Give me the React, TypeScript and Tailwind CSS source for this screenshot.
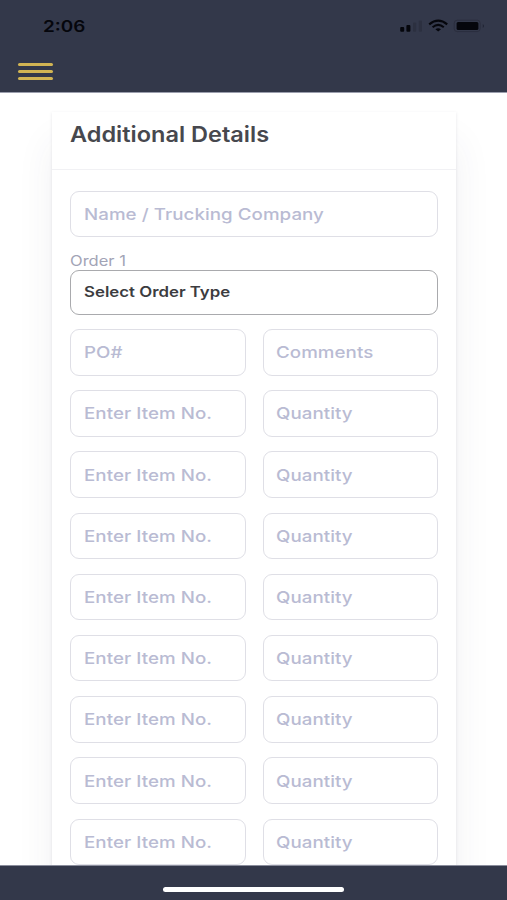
import { clsx } from 'clsx';

const ITEM_ROWS = 8;

const StatusBar = () => (
  <div className="flex h-[52px] items-center justify-between pl-[43px] pr-[20px] text-[#05060c]">
    <span className="inline-block origin-left scale-x-[1.18] text-base font-semibold leading-none">2:06</span>
    <svg width="88" height="16" viewBox="0 0 88 16" fill="none">
      {/* signal */}
      <rect x="1.2" y="9" width="4" height="4.8" rx="1" fill="currentColor" />
      <rect x="7.4" y="7" width="4" height="6.8" rx="1" fill="currentColor" />
      <rect x="14" y="4.5" width="3.2" height="9.3" rx="1" fill="#2c3040" />
      <rect x="19.8" y="2.5" width="3.2" height="11.3" rx="1" fill="#2c3040" />
      {/* wifi */}
      <path d="M30.2 6.3Q39.2 -.9 48.2 6.3" stroke="currentColor" strokeWidth="2.2" />
      <path d="M33.6 9.2Q39.2 4.7 44.8 9.2" stroke="currentColor" strokeWidth="2.1" />
      <path d="M36.4 11.2Q39.2 9.2 42 11.2L39.2 13.6Z" fill="currentColor" />
      {/* battery */}
      <rect x="55.2" y="2.2" width="26" height="11.4" rx="3" stroke="#2b2e3e" />
      <rect x="57.6" y="4" width="21.8" height="8" rx="1.5" fill="currentColor" />
      <path d="M83.8 5.9Q86.2 7.9 83.8 9.9Z" fill="#212433" />
    </svg>
  </div>
);

const Header = () => (
  <header className="h-[93px] shrink-0 border-b border-[#9b9ead] bg-[#33384a]">
    <StatusBar />
    <button type="button" aria-label="Menu" className="ml-[18px] mt-[10.5px] flex w-[35px] flex-col gap-1">
      <span className="h-[3.2px] rounded-full bg-[#d1b453]" />
      <span className="h-[3.2px] rounded-full bg-[#d1b453]" />
      <span className="h-[3.2px] rounded-full bg-[#d1b453]" />
    </button>
  </header>
);

const Field = ({ label, className }: { label: string; className?: string }) => (
  <div
    className={clsx(
      'flex h-[46.5px] items-center rounded-[9px] border-[1.5px] border-[#dfdfe6] bg-white pl-[12.5px] text-base font-medium text-[#b9bbd3]',
      className,
    )}
  >
    <span className="inline-block origin-left scale-x-[1.17] whitespace-nowrap tracking-[0.05px]">{label}</span>
  </div>
);

export default function App() {
  return (
    <div className="flex h-[900px] w-[507px] flex-col overflow-hidden bg-white font-['Inter','Liberation_Sans',sans-serif]">
      <Header />

      <main className="min-h-0 flex-1 overflow-hidden pl-[52px] pr-[51px] pt-[19px]">
        <section className="h-[900px] bg-white shadow-[0_1px_3px_rgba(60,60,90,0.13),0_30px_36px_rgba(60,60,90,0.07)]">
          <div className="flex h-[58px] items-center border-b border-[#f1f1f4] pb-3 pl-[18px]">
            <h1 className="origin-left scale-x-[1.12] text-[21px] font-semibold text-[#47484e]">Additional Details</h1>
          </div>

          <div className="px-[18px] pt-[20.5px]">
            <Field label="Name / Trucking Company" />

            <div className="mt-4 flex h-[16.5px] items-center text-sm text-[#a2a4b6]">
              <span className="inline-block origin-left scale-x-[1.18]">Order 1</span>
            </div>
            <button
              type="button"
              className="flex h-[45px] w-full items-center rounded-[9px] border-[1.5px] border-[#a9aaad] pl-[12.5px] text-[14.5px] font-semibold text-[#3c3c3f]"
            >
              <span className="inline-block origin-left scale-x-[1.16]">Select Order Type</span>
            </button>

            <div className="mt-[14.5px] grid grid-cols-2 gap-x-[17px] gap-y-[14.7px]">
              <Field label="PO#" />
              <Field label="Comments" />
              {Array.from({ length: ITEM_ROWS }, (_, i) => [
                <Field key={`item-${i}`} label="Enter Item No." />,
                <Field key={`qty-${i}`} label="Quantity" />,
              ])}
            </div>
          </div>
        </section>
      </main>

      <footer className="flex h-[35px] shrink-0 items-end justify-center border-t border-[#8a8d9c] bg-[#33384a] pb-2">
        <div className="h-[5px] w-[181px] rounded-full bg-white" />
      </footer>
    </div>
  );
}
